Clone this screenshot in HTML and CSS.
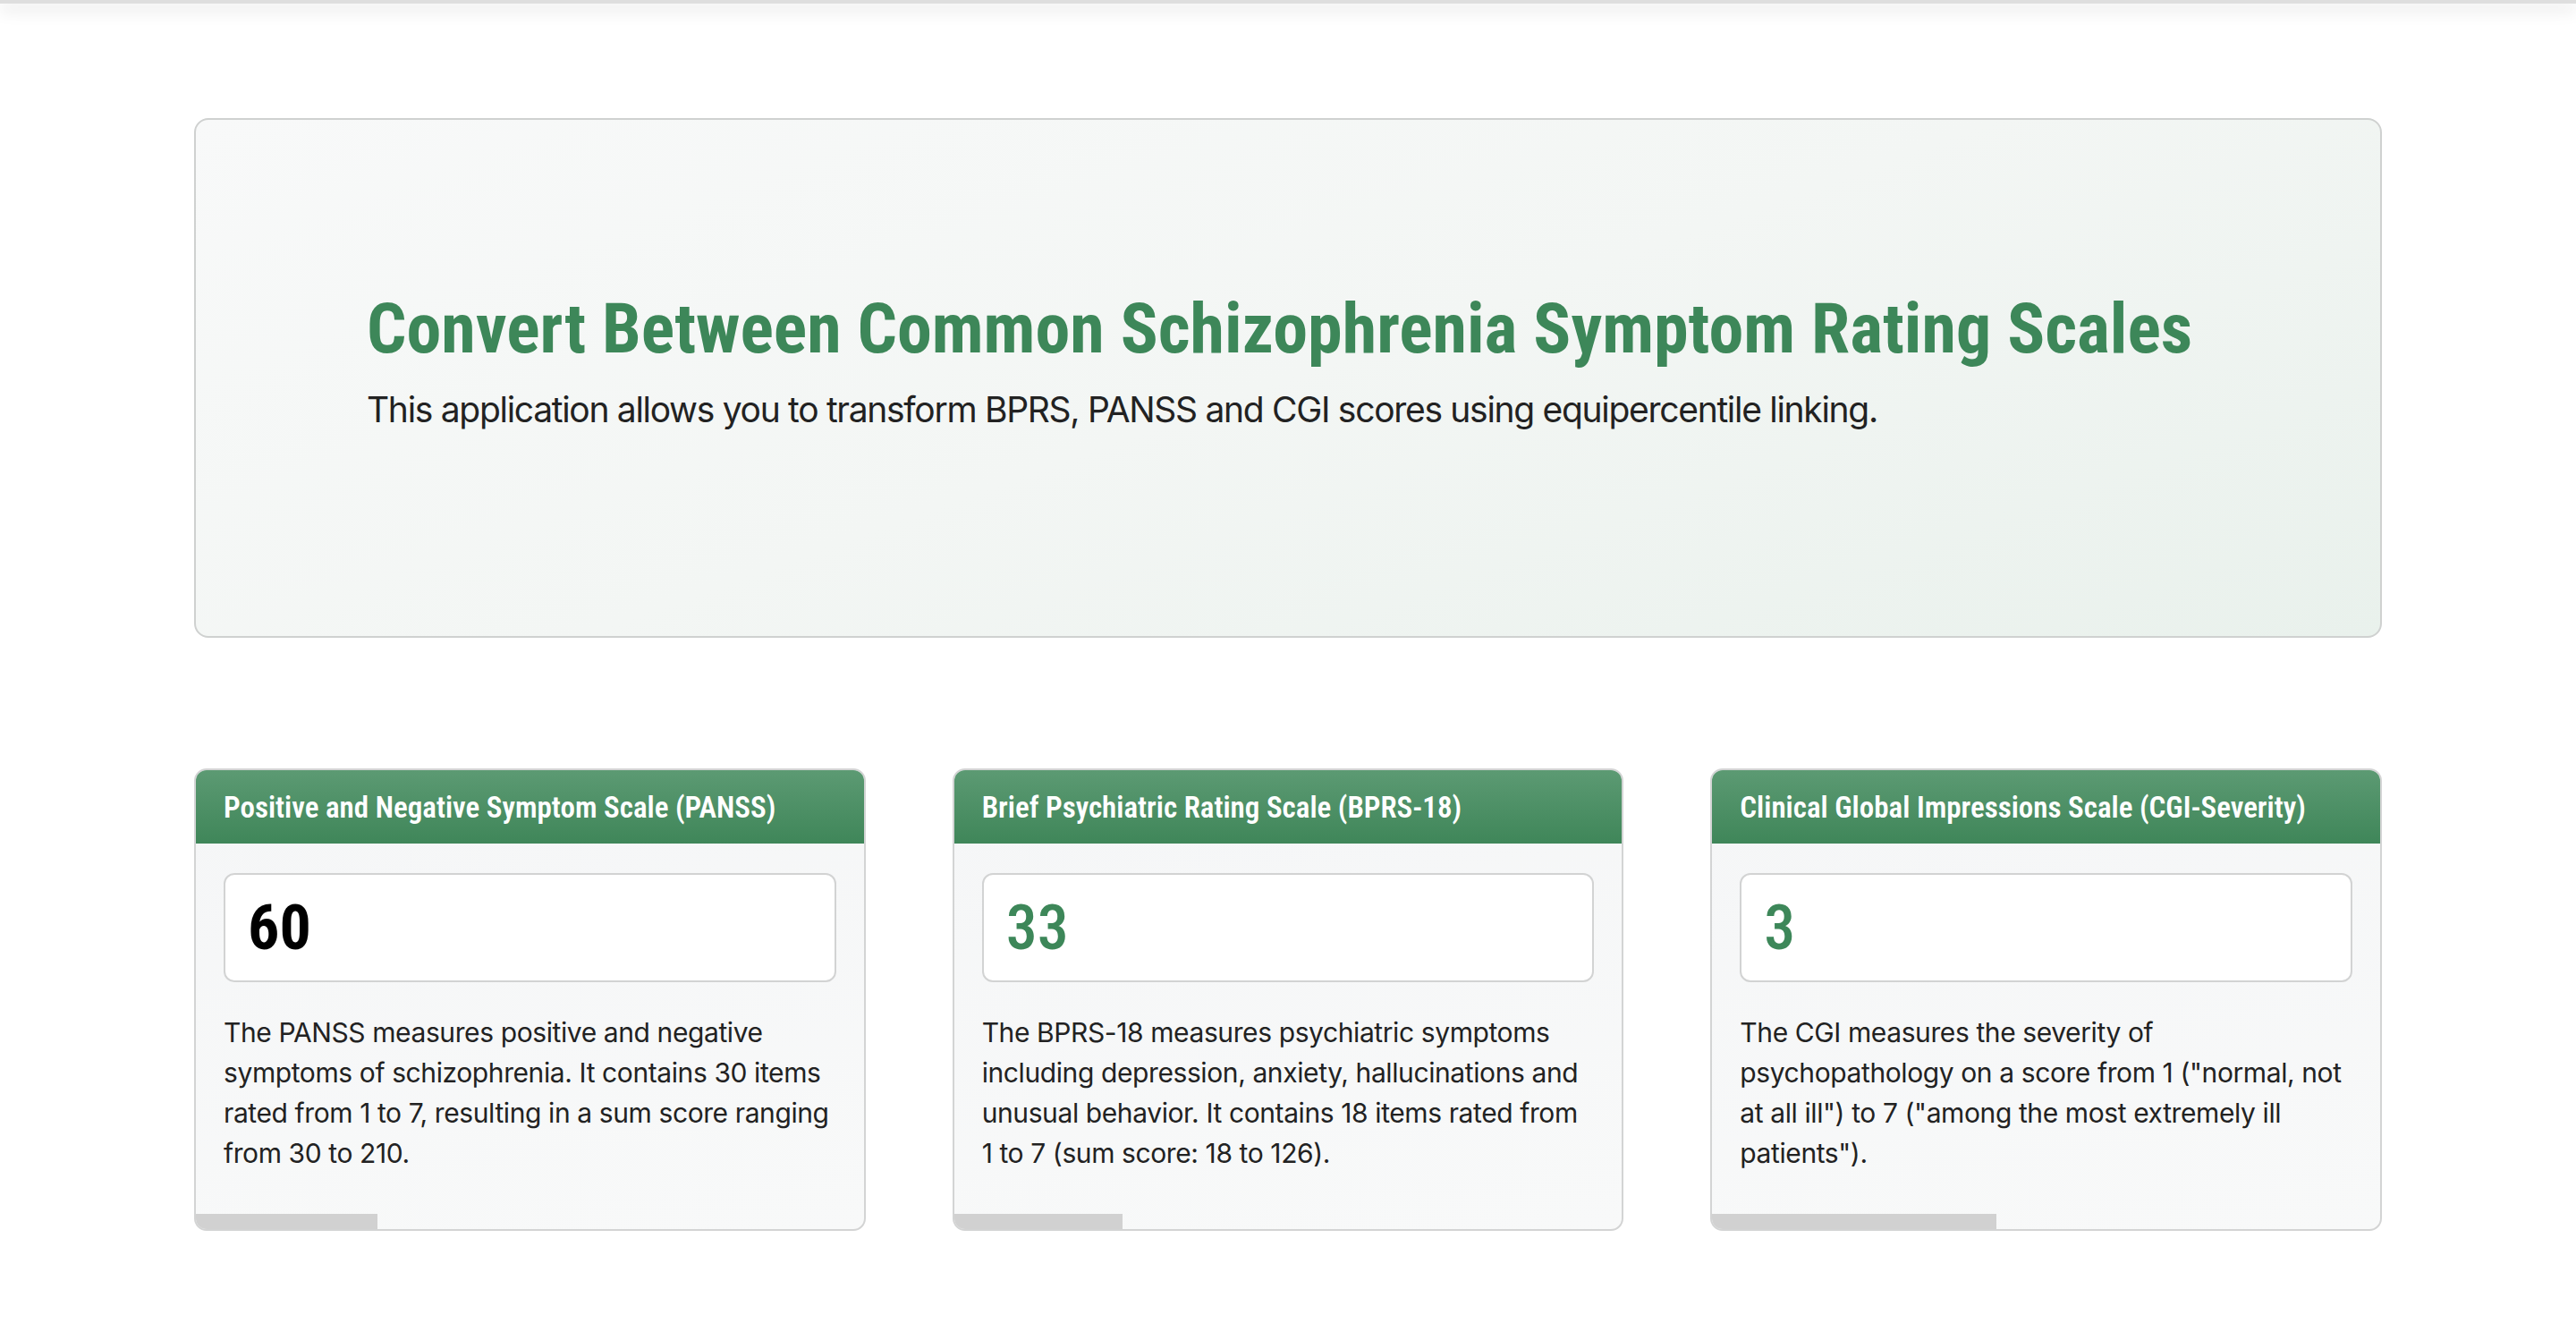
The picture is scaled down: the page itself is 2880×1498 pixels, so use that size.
FILE: index.html
```html
<!DOCTYPE html>
<html lang="en">
<head>
<meta charset="utf-8">
<title>Convert Between Common Schizophrenia Symptom Rating Scales</title>
<link rel="stylesheet" href="styles.css">
</head>
<body>
<div class="topbar"></div>
<main class="page">
  <section class="hero">
    <h1 class="hero-title">Convert Between Common Schizophrenia Symptom Rating Scales</h1>
    <p class="hero-lead">This application allows you to transform BPRS, PANSS and CGI scores using equipercentile linking.</p>
  </section>
  <section class="cards">
    <article class="card">
      <header class="card-head">Positive and Negative Symptom Scale (PANSS)</header>
      <div class="card-body">
        <div class="score score-active">60</div>
        <p class="desc">The PANSS measures positive and negative symptoms of schizophrenia. It contains 30 items rated from 1 to 7, resulting in a sum score ranging from 30 to 210.</p>
      </div>
      <div class="track"><div class="thumb" style="width:27.2%"></div></div>
    </article>
    <article class="card">
      <header class="card-head">Brief Psychiatric Rating Scale (BPRS-18)</header>
      <div class="card-body">
        <div class="score">33</div>
        <p class="desc">The BPRS-18 measures psychiatric symptoms including depression, anxiety, hallucinations and unusual behavior. It contains 18 items rated from 1 to 7 (sum score: 18 to 126).</p>
      </div>
      <div class="track"><div class="thumb" style="width:25.2%"></div></div>
    </article>
    <article class="card">
      <header class="card-head">Clinical Global Impressions Scale (CGI-Severity)</header>
      <div class="card-body">
        <div class="score">3</div>
        <p class="desc">The CGI measures the severity of psychopathology on a score from 1 ("normal, not at all ill") to 7 ("among the most extremely ill patients").</p>
      </div>
      <div class="track"><div class="thumb" style="width:42.5%"></div></div>
    </article>
  </section>
</main>
</body>
</html>
```
FILE: styles.css
```css
html, body {
  margin: 0;
  padding: 0;
  background: #ffffff;
}
body {
  font-family: Inter, "Open Sans", "Liberation Sans", sans-serif;
  color: #1f1f1f;
}
.topbar {
  height: 4px;
  background: #dedede;
  box-shadow: 0 6px 18px rgba(0, 0, 0, 0.22);
}
.page {
  padding: 128px 217px 120px;
}
.hero {
  box-sizing: border-box;
  height: 581px;
  border: 2px solid #cfd1d0;
  border-radius: 16px;
  background: linear-gradient(160deg, #f8f9f9 0%, #f3f6f4 50%, #e9f1ec 100%);
  display: flex;
  flex-direction: column;
  justify-content: center;
  padding: 0 191px 40px;
}
.hero-title {
  margin: 0;
  font-family: "Roboto Condensed", "Open Sans", sans-serif;
  font-weight: 700;
  font-size: 78px;
  line-height: 1.2;
  color: #3d8759;
  white-space: nowrap;
}
.hero-lead {
  margin: 18px 0 0;
  font-size: 39px;
  line-height: 1.3;
  font-weight: 400;
  color: #222;
  letter-spacing: -1.3px;
}
.cards {
  margin-top: 146px;
  display: grid;
  grid-template-columns: repeat(3, 1fr);
  gap: 97px;
}
.card {
  box-sizing: border-box;
  height: 517px;
  border: 2px solid #d3d4d4;
  border-radius: 14px;
  background: linear-gradient(170deg, #f5f6f7, #f8f9f9);
  overflow: hidden;
  display: flex;
  flex-direction: column;
}
.card-head {
  height: 82px;
  box-sizing: border-box;
  padding: 0 31px;
  display: flex;
  align-items: center;
  background: linear-gradient(180deg, #5c9a73 0%, #3f8659 100%);
  color: #ffffff;
  font-family: "Roboto Condensed", "Open Sans", sans-serif;
  font-weight: 600;
  font-size: 33px;
  white-space: nowrap;
}
.card-body {
  flex: 1;
  padding: 33px 31px 0;
}
.score {
  box-sizing: border-box;
  height: 122px;
  border: 2px solid #d2d3d3;
  border-radius: 12px;
  background: #ffffff;
  display: flex;
  align-items: center;
  padding: 0 25px;
  font-family: "Roboto Condensed", "Open Sans", sans-serif;
  font-size: 70px;
  font-weight: 500;
  color: #3d8759;
}
.score-active {
  color: #000;
  font-weight: 700;
}
.desc {
  margin: 34px 0 0;
  font-size: 30px;
  line-height: 45px;
  color: #222;
  letter-spacing: -0.4px;
}
.track {
  height: 17px;
}
.thumb {
  height: 100%;
  background: #d1d1d1;
}
```
